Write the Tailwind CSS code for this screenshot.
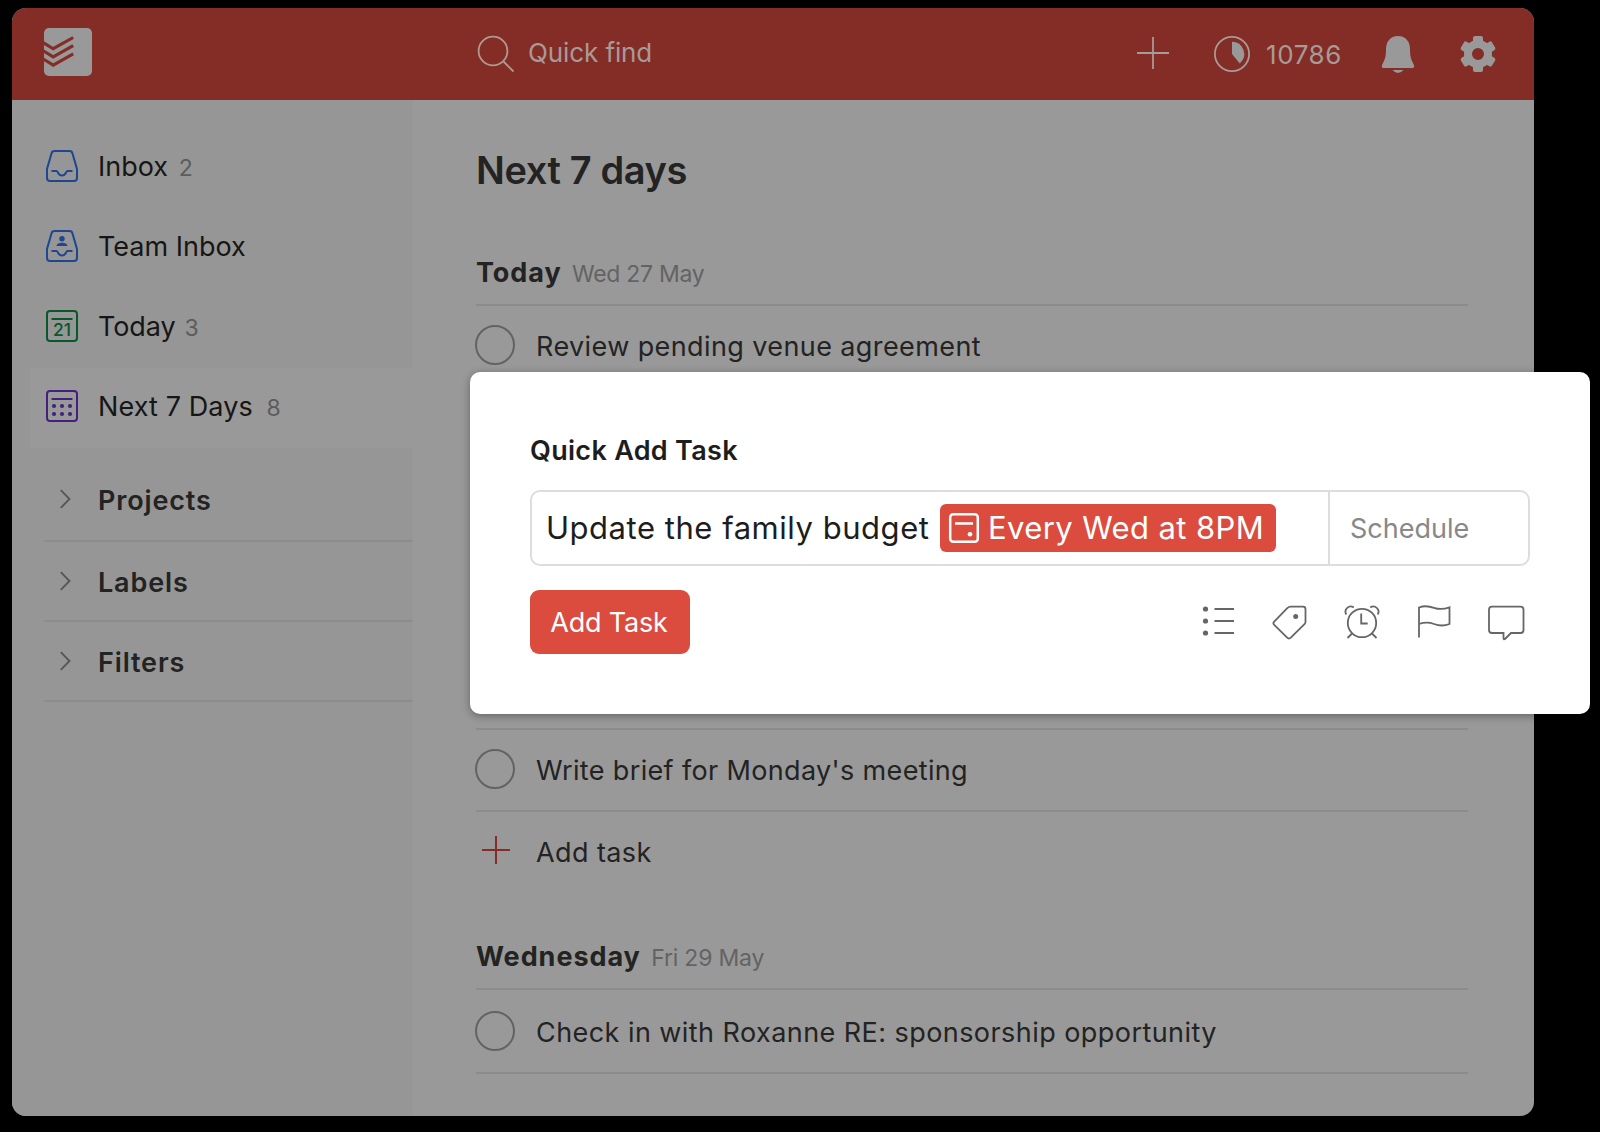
<!DOCTYPE html>
<html lang="en">
<head>
<meta charset="utf-8">
<title>Next 7 days</title>
<script src="https://cdn.jsdelivr.net/npm/@tailwindcss/browser@4"></script>
</head>
<body class="relative h-[1132px] w-[1600px] overflow-hidden bg-black font-['Inter',sans-serif] text-[27px]">
<div class="pt-2 pl-3">
<div class="h-[1108px] w-[1522px] overflow-hidden rounded-[14px] bg-[#999999]">
  <header class="flex h-23 items-center bg-[#832d26] pl-8 text-[26px] text-[#a79a98]">
    <svg class="mb-1 size-12" viewBox="44 28 48 48" fill="none"><rect x="44" y="28" width="48" height="48" rx="5" fill="#999"/><path d="M43 42.500l10.200 6.200 20-11.200M43 50.700l10.200 6.200 20-11.200M43 58.900l10.200 6.200 20-11.200" stroke="#832d26" stroke-width="3.100"/></svg>
    <svg class="ml-[382px] size-11" viewBox="474 32 44 44" fill="none" stroke="#b09a90" stroke-width="1.8"><circle cx="493" cy="51" r="14.4"/><path d="M503.5 61.5l10 10"/></svg>
    <span class="mb-[4px] ml-[10px] w-[149px] tracking-[-0.1px] whitespace-nowrap">Quick find</span>
    <svg class="ml-[454px] size-11" viewBox="1131 32 44 44" stroke="#a79a98" stroke-width="1.8"><path d="M1137 53h32M1153 37v32"/></svg>
    <svg class="ml-[35px] size-11" viewBox="1210 32 44 44" fill="none"><circle cx="1232" cy="54" r="17.1" stroke="#a79a98" stroke-width="1.8"/><path d="M1232 54V41.7A12.3 12.3 0 0 1 1239.8 63.4z" fill="#999"/></svg>
    <span class="ml-[12px] w-[89px] tracking-[0.6px] whitespace-nowrap">10786</span>
    <svg class="ml-[21px] size-11" viewBox="1376 32 44 44" fill="#999"><path d="M1398 36c8 0 12 6 12 13 0 8 1 10 3.7 15.500q1.600 3.500-1.700 3.500h-28q-3.300 0-1.700-3.500c2.700-5.500 3.700-7.500 3.700-15.500 0-7 4-13 12-13zM1392.500 70h11q-5.500 6-11 0z"/></svg>
    <svg class="ml-9 size-11" viewBox="1456 32 44 44" fill="none"><circle cx="1478" cy="54" r="10" stroke="#999" stroke-width="8"/><g fill="#999"><rect id="tooth" x="1473" y="36" width="10" height="8" rx="2"/><use href="#tooth" transform="rotate(60 1478 54)"/><use href="#tooth" transform="rotate(120 1478 54)"/><use href="#tooth" transform="rotate(180 1478 54)"/><use href="#tooth" transform="rotate(240 1478 54)"/><use href="#tooth" transform="rotate(300 1478 54)"/></g></svg>
  </header>
  <div class="flex h-[1016px]">
    <aside class="w-[401px] bg-[#969696] pt-7 pl-[18px] text-[#161616]">
      <div class="flex h-20 items-center pb-1 pl-4">
        <svg class="size-8 overflow-visible" viewBox="46 150 32 32" fill="none" stroke="#1e4691" stroke-width="2"><g id="tray"><path d="M54.500 151h15q2.500 0 3 2.500l4.500 15.500v9q0 3-3 3h-24q-3 0-3-3v-9l4.500-15.500q.5-2.500 3-2.500z"/><path d="M51.500 171h5c1.500 0 1.500 4.500 5.500 4.500s4-4.500 5.500-4.500h5"/></g></svg>
        <div class="mt-0.5 ml-5 whitespace-nowrap">Inbox <span class="ml-[3px] text-[23px] leading-none text-[#5c5c5c]">2</span></div>
      </div>
      <div class="flex h-20 items-center pb-1 pl-4">
        <svg class="size-8 overflow-visible" viewBox="46 150 32 32" fill="none" stroke="#1e4691" stroke-width="2"><use href="#tray"/><g fill="#1e4691" stroke="none"><circle cx="62" cy="158.700" r="2.700"/><path d="M56.500 166c0-4.500 11-4.500 11 0z"/></g></svg>
        <div class="mt-0.5 ml-5 whitespace-nowrap">Team Inbox</div>
      </div>
      <div class="flex h-20 items-center pb-1 pl-4">
        <svg class="size-8" viewBox="46 310 32 32" fill="none" stroke="#07592a" stroke-width="2"><rect x="47" y="311" width="30" height="30" rx="3"/><path d="M51.500 319h21"/><text x="62" y="335.700" text-anchor="middle" font-size="17.500" font-weight="500" fill="#07592a" stroke="none">21</text></svg>
        <div class="mt-0.5 ml-5 tracking-[-0.1px] whitespace-nowrap">Today <span class="ml-[1.5px] text-[23px] leading-none text-[#5c5c5c]">3</span></div>
      </div>
      <div class="flex h-20 items-center bg-[#999999] pb-1 pl-4">
        <svg class="size-8" viewBox="46 390 32 32" fill="none" stroke="#432080" stroke-width="2"><rect x="47" y="391" width="30" height="30" rx="3"/><path d="M51.500 399h21"/><g fill="#432080" stroke="none"><circle cx="54" cy="406" r="2.100"/><circle cx="62" cy="406" r="2.100"/><circle cx="70" cy="406" r="2.100"/><circle cx="54" cy="414" r="2.100"/><circle cx="62" cy="414" r="2.100"/><circle cx="70" cy="414" r="2.100"/></g></svg>
        <div class="mt-0.5 ml-5 tracking-[0.1px] whitespace-nowrap">Next 7 Days <span class="ml-[6px] text-[23px] leading-none text-[#5c5c5c]">8</span></div>
      </div>
      <div class="mr-px ml-[14px] font-semibold tracking-[0.85px] text-[#232323]">
        <div class="flex h-[94px] items-center border-b-2 border-[#8c8c8c] pt-3 pl-4"><svg class="mb-0.5 h-5 w-3" viewBox="0 0 12 20" fill="none" stroke="#555" stroke-width="1.800"><path d="M.8 1.200L9.500 10 .8 18.800"/></svg><span class="mt-0.5 ml-[26px]">Projects</span></div>
        <div class="flex h-20 items-center border-b-2 border-[#8c8c8c] pt-0.5 pl-4"><svg class="mb-0.5 h-5 w-3" viewBox="0 0 12 20" fill="none" stroke="#555" stroke-width="1.800"><path d="M.8 1.200L9.500 10 .8 18.800"/></svg><span class="mt-0.5 ml-[26px]">Labels</span></div>
        <div class="flex h-20 items-center border-b-2 border-[#8c8c8c] pt-0.5 pl-4"><svg class="mb-0.5 h-5 w-3" viewBox="0 0 12 20" fill="none" stroke="#555" stroke-width="1.800"><path d="M.8 1.200L9.500 10 .8 18.800"/></svg><span class="mt-0.5 ml-[26px]">Filters</span></div>
      </div>
    </aside>
    <main class="flex-1 pr-[66px] pl-[63px] tracking-[0.4px] text-[#232323]">
      <h1 class="h-35 text-[38px] leading-[140px] font-semibold tracking-[-0.4px]">Next 7 days</h1>
      <h2 class="h-[66px] border-b-2 border-[#8b8b8b] leading-[66px] font-bold tracking-[0.95px]">Today <span class="ml-[3px] text-[23px] leading-none font-normal tracking-[-0.3px] text-[#636363]">Wed 27 May</span></h2>
      <div class="flex h-[82px] items-center border-b-2 border-[#8b8b8b]"><i class="-ml-px mb-0.5 size-10 rounded-full border-2 border-[#636363]"></i><span class="mt-0.5 ml-[21px]">Review pending venue agreement</span></div>
      <div class="h-[342px] border-b-2 border-[#8b8b8b]"></div>
      <div class="flex h-[82px] items-center border-b-2 border-[#8b8b8b]"><i class="-ml-px mb-0.5 size-10 rounded-full border-2 border-[#636363]"></i><span class="mt-0.5 ml-[21px] tracking-[0.35px]">Write brief for Monday's meeting</span></div>
      <div class="flex h-20 items-center"><svg class="mb-1 ml-[5px] size-[30px]" viewBox="481 835 30 30" stroke="#832d26" stroke-width="2"><path d="M482 850h28M496 836v28"/></svg><span class="mt-0.5 ml-[25px]">Add task</span></div>
      <h2 class="mt-8 h-[66px] border-b-2 border-[#8b8b8b] leading-[66px] font-bold tracking-[0.95px]">Wednesday <span class="ml-[3px] text-[23px] leading-none font-normal tracking-[-0.2px] text-[#636363]">Fri 29 May</span></h2>
      <div class="flex h-[84px] items-center border-b-2 border-[#8b8b8b]"><i class="-ml-px size-10 rounded-full border-2 border-[#636363]"></i><span class="mt-1 ml-[21px] tracking-[0.44px]">Check in with Roxanne RE: sponsorship opportunity</span></div>
    </main>
  </div>
</div>
</div>
<section class="absolute top-[372px] left-[470px] h-[342px] w-[1120px] rounded-[10px] bg-white px-[60px] pt-[59px] text-[#1d1d1d] shadow-[0_2px_8px_rgba(0,0,0,.35)]">
  <h3 class="leading-10 font-semibold tracking-[0.3px]">Quick Add Task</h3>
  <div class="mt-[19px] flex h-[76px] rounded-[10px] border-2 border-[#dddddd]">
    <div class="flex flex-1 items-center pl-[14px] text-[31px] tracking-[0.53px]"><span class="w-[394px] whitespace-nowrap">Update the family budget</span>
      <span class="flex h-12 w-[336px] items-center rounded-md bg-[#dc4c3e] pl-2 tracking-[0.4px] whitespace-nowrap text-white"><svg class="size-8" viewBox="948 511 32 32" fill="none" stroke="#fff" stroke-width="2.500"><rect x="950.200" y="513.200" width="27.600" height="27.600" rx="3"/><path d="M955 522.500h18"/><circle cx="970" cy="533.300" r="2.300" fill="#fff" stroke="none"/></svg><span class="ml-[8px]">Every Wed at 8PM</span></span></div>
    <div class="flex w-50 items-center border-l-2 border-[#dddddd] pt-[3px] pl-5 text-[#888888]">Schedule</div>
  </div>
  <div class="mt-6 flex h-16 items-center">
    <button class="h-16 w-40 rounded-[9px] bg-[#dc4c3e] pt-0.5 pr-0.5 tracking-[-0.2px] text-white">Add Task</button>
    <div class="ml-auto flex gap-8 pr-0.5 text-[#666666]">
      <svg class="size-10" viewBox="1200 602 40 40" stroke="currentColor" stroke-width="2"><path d="M1214.500 609h19.500M1214.500 621h19.500M1214.500 633h19.500"/><g fill="currentColor" stroke="none"><circle cx="1205.500" cy="609" r="2.600"/><circle cx="1205.500" cy="621" r="2.600"/><circle cx="1205.500" cy="633" r="2.600"/></g></svg>
      <svg class="size-10" viewBox="1272 602 40 40" fill="none" stroke="currentColor" stroke-width="1.800"><path d="M1290.500 606.700h12.500q2.500 0 2.500 2.500v12.500q0 1.300-.8 2.200L1290.800 637.600q-1.800 1.800-3.600 0L1274.200 624.800q-1.600-1.600 0-3.200L1287.500 608q1.200-1.300 3-1.300z"/><circle cx="1295.700" cy="616.500" r="2.500" fill="currentColor" stroke="none"/></svg>
      <svg class="size-10" viewBox="1344 602 40 40" fill="none" stroke="currentColor" stroke-width="1.800"><circle cx="1362" cy="623" r="14.200"/><path d="M1361.200 613.500v10h6.500M1346.300 614.500c-3-5.500 3-10 7.500-7M1377.700 614.500c3-5.500-3-10-7.500-7M1352 633.500l-4.500 4.500M1372 633.500l4.500 4.500"/></svg>
      <svg class="size-10" viewBox="1416 602 40 40" fill="none" stroke="currentColor" stroke-width="1.800"><path d="M1419 637.500V607.500c5-2 10-1.500 15 .3s10 1.500 15.500-.5V624c-5 2-10 2-15.500 0s-10.500-1.500-15 0"/></svg>
      <svg class="size-10" viewBox="1488 602 40 40" fill="none" stroke="currentColor" stroke-width="1.800"><path d="M1492 606.700h28.500q3 0 3 3V630q0 3-3 3H1511l-6 6q-1.500 1-1.500-1V633H1492q-3 0-3-3v-20.300q0-3 3-3z"/></svg>
    </div>
  </div>
</section>
</body>
</html>
